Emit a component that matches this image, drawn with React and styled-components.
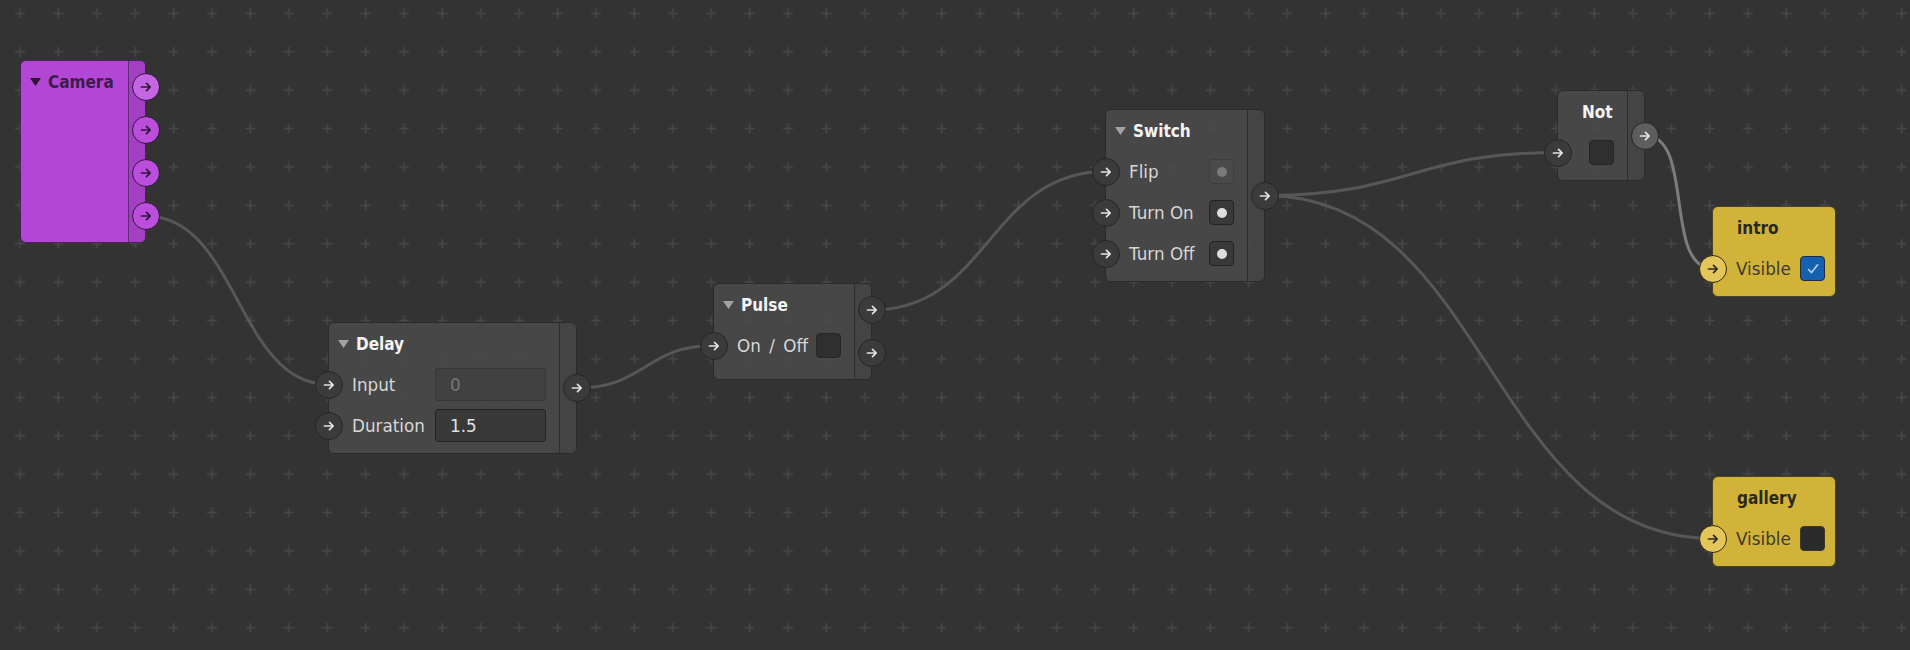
import React from "react";
import styled, { createGlobalStyle } from "styled-components";

const GlobalStyle = createGlobalStyle`
  html, body {
    margin: 0;
    padding: 0;
    background: #333333;
  }
  body {
    overflow: hidden;
    font-family: "DejaVu Sans", "Liberation Sans", sans-serif;
  }
`;

const themes = {
    gray: {
        bg: "rgba(75, 75, 75, 0.86)",
        strip: "rgba(0, 0, 0, 0.04)",
        border: "#2b2b2b",
        divider: "#2e2e2e",
        title: "#f4f4f4",
        text: "#d6d6d6",
        caret: "#a2a2a2",
        port: "#3b3b3b",
        portBorder: "#262626",
        arrow: "#e4e4e4",
        padRight: 13,
    },
    purple: {
        bg: "#b446d6",
        strip: "#a43ec4",
        border: "#4a2358",
        divider: "#5e2a72",
        title: "#3a1e47",
        text: "#3a1e47",
        caret: "#2c1536",
        port: "#bb4edc",
        portBorder: "#2e1838",
        arrow: "#2e1838",
        padRight: 13,
    },
    yellow: {
        bg: "#d2b33a",
        strip: "transparent",
        border: "#4c4226",
        divider: "transparent",
        title: "#2a2920",
        text: "#3e3b2d",
        caret: "#2a2920",
        port: "#e2c65a",
        portBorder: "#2d2a1e",
        arrow: "#2d2a22",
        padRight: 10,
    },
};

const HEADER = 41;
const ROW = 41;
const BODY_PAD = 7;
const PORT = 28;
const PORT_GAP = 15;
const STRIP_PAD = 12;

const nodes = [
    { id: "camera", x: 20, y: 60, w: 126, theme: "purple", title: "Camera", caret: true, rows: [], outs: 4, hotFirst: true },
    {
        id: "delay", x: 328, y: 322, w: 249, theme: "gray", title: "Delay", caret: true, outs: 1,
        rows: [
            { label: "Input", field: "0", disabled: true },
            { label: "Duration", field: "1.5" },
        ],
    },
    { id: "pulse", x: 713, y: 283, w: 159, theme: "gray", title: "Pulse", caret: true, outs: 2, rows: [{ label: "On / Off", check: "empty", wide: true }] },
    {
        id: "switch", x: 1105, y: 109, w: 160, theme: "gray", title: "Switch", caret: true, outs: 1,
        rows: [
            { label: "Flip", check: "dotOff" },
            { label: "Turn On", check: "dot" },
            { label: "Turn Off", check: "dot" },
        ],
    },
    { id: "not", x: 1557, y: 90, w: 88, theme: "gray", title: "Not", outs: 1, hotOut: true, rows: [{ check: "empty" }] },
    { id: "intro", x: 1712, y: 206, w: 124, theme: "yellow", title: "intro", outs: 0, rows: [{ label: "Visible", check: "checked" }] },
    { id: "gallery", x: 1712, y: 476, w: 124, theme: "yellow", title: "gallery", outs: 0, rows: [{ label: "Visible", check: "dark" }] },
];

const byId = Object.fromEntries(nodes.map((n) => [n.id, n]));

const innerHeight = (n) => {
    const body = HEADER + n.rows.length * ROW + BODY_PAD;
    const stack = n.outs * PORT + Math.max(n.outs - 1, 0) * PORT_GAP;
    return Math.max(body, n.outs ? stack + STRIP_PAD * 2 : 0);
};

const inPort = (id, i) => {
    const n = byId[id];
    return [n.x + 1, n.y + 1 + HEADER + ROW / 2 + i * ROW];
};

const outPort = (id, i) => {
    const n = byId[id];
    const stack = n.outs * PORT + (n.outs - 1) * PORT_GAP;
    const top = (innerHeight(n) - stack) / 2;
    return [n.x + n.w, n.y + 1 + top + PORT / 2 + i * (PORT + PORT_GAP)];
};

const wires = [
    { from: outPort("camera", 3), to: inPort("delay", 0) },
    { from: outPort("delay", 0), to: inPort("pulse", 0) },
    { from: outPort("pulse", 0), to: inPort("switch", 0) },
    { from: outPort("switch", 0), to: inPort("not", 0) },
    { from: outPort("switch", 0), to: inPort("gallery", 0) },
    { from: outPort("not", 0), to: inPort("intro", 0), hot: true },
];

const wirePath = ([x1, y1], [x2, y2]) => {
    const d = Math.max((x2 - x1) / 2, 50);
    return `M ${x1} ${y1} C ${x1 + d} ${y1}, ${x2 - d} ${y2}, ${x2} ${y2}`;
};

const Canvas = styled.div`
    position: relative;
    width: 1910px;
    height: 650px;
    overflow: hidden;
    background: #333333;
`;

const Layer = styled.svg`
    position: absolute;
    left: 0;
    top: 0;
    width: 1910px;
    height: 650px;
    pointer-events: none;
`;

const Wire = styled.path`
    fill: none;
    stroke: ${(p) => (p.$hot ? "#7c7c7c" : "#575757")};
    stroke-width: 3;
`;

const NodeBox = styled.div`
    position: absolute;
    left: ${(p) => p.$x}px;
    top: ${(p) => p.$y}px;
    width: ${(p) => p.$w}px;
    box-sizing: border-box;
    display: flex;
    background: ${(p) => p.$t.bg};
    border: 1px solid ${(p) => p.$t.border};
    border-radius: 6px;
    color: ${(p) => p.$t.text};
`;

const Body = styled.div`
    flex: 1;
    display: flex;
    flex-direction: column;
    padding-bottom: ${BODY_PAD}px;
`;

const Header = styled.div`
    height: ${HEADER}px;
    display: flex;
    align-items: center;
    gap: 7px;
    padding-left: ${(p) => (p.$caret ? 9 : 24)}px;
`;

const Title = styled.span`
    font-family: "DejaVu Sans Condensed", "DejaVu Sans", sans-serif;
    font-stretch: condensed;
    font-weight: 700;
    font-size: 17px;
    color: ${(p) => p.$t.title};
    padding-top: 1px;
`;

const Caret = styled.svg`
    width: 11px;
    height: 8px;
    flex: none;
`;

const Row = styled.div`
    position: relative;
    height: ${ROW}px;
    display: flex;
    align-items: center;
    justify-content: flex-end;
    padding: 0 ${(p) => p.$t.padRight}px 0 23px;
`;

const Label = styled.span`
    flex: 1;
    font-size: 16.8px;
    white-space: nowrap;
    word-spacing: ${(p) => (p.$wide ? "3px" : "0")};
`;

const Field = styled.div`
    width: 111px;
    height: 33px;
    box-sizing: border-box;
    display: flex;
    align-items: center;
    padding-left: 14px;
    font-size: 16.8px;
    border-radius: 3px;
    background: ${(p) => (p.$disabled ? "#414141" : "#393939")};
    border: 1px solid ${(p) => (p.$disabled ? "#383838" : "#242424")};
    color: ${(p) => (p.$disabled ? "#767676" : "#e0e0e0")};
`;

const checkLook = {
    empty: { bg: "#2f2f2f", border: "#262626" },
    dark: { bg: "#2b2b2b", border: "#3e3820" },
    dot: { bg: "#393939", border: "#222222", dot: "#dedede" },
    dotOff: { bg: "#4a4a4a", border: "#3d3d3d", dot: "#7a7a7a" },
    checked: { bg: "#1660b0", border: "#1f2c3c" },
};

const Check = styled.div`
    width: 25px;
    height: 25px;
    flex: none;
    box-sizing: border-box;
    display: flex;
    align-items: center;
    justify-content: center;
    border-radius: 4px;
    background: ${(p) => checkLook[p.$kind].bg};
    border: 1.5px solid ${(p) => checkLook[p.$kind].border};
`;

const Dot = styled.span`
    width: 10px;
    height: 10px;
    border-radius: 50%;
    background: ${(p) => p.$color};
`;

const Strip = styled.div`
    width: 16px;
    flex: none;
    display: flex;
    flex-direction: column;
    justify-content: center;
    align-items: flex-end;
    gap: ${PORT_GAP}px;
    padding: ${STRIP_PAD}px 0;
    background: ${(p) => p.$t.strip};
    border-left: 1px solid ${(p) => p.$t.divider};
    border-radius: 0 5px 5px 0;
`;

const PortDisc = styled.div`
    width: ${PORT}px;
    height: ${PORT}px;
    box-sizing: border-box;
    flex: none;
    display: flex;
    align-items: center;
    justify-content: center;
    border-radius: 50%;
    background: ${(p) => p.$fill || p.$t.port};
    border: 1.5px solid ${(p) => p.$t.portBorder};
`;

const OutPort = styled(PortDisc)`
    margin-right: -15px;
`;

const InPort = styled(PortDisc)`
    position: absolute;
    left: -14px;
    top: ${(ROW - PORT) / 2}px;
`;

const Arrow = ({ color }) => (
    <svg width="14" height="14" viewBox="0 0 14 14">
        <path d="M2.5 7 H11 M7.5 3.3 L11.2 7 L7.5 10.7" fill="none" stroke={color} strokeWidth="1.7" strokeLinecap="round" strokeLinejoin="round" />
    </svg>
);

const CheckMark = () => (
    <svg width="16" height="16" viewBox="0 0 16 16">
        <path d="M3.5 8.5 L6.6 11.6 L12.6 3.8" fill="none" stroke="#b9d2ee" strokeWidth="1.6" strokeLinecap="round" strokeLinejoin="round" />
    </svg>
);

const CheckBox = ({ kind }) => {
    const look = checkLook[kind];
    return (
        <Check $kind={kind}>
            {look.dot && <Dot $color={look.dot} />}
            {kind === "checked" && <CheckMark />}
        </Check>
    );
};

const Node = ({ node }) => {
    const t = themes[node.theme];
    return (
        <NodeBox $x={node.x} $y={node.y} $w={node.w} $t={t}>
            <Body>
                <Header $caret={node.caret}>
                    {node.caret && (
                        <Caret viewBox="0 0 11 8">
                            <path d="M0 0 H11 L5.5 8 Z" fill={t.caret} />
                        </Caret>
                    )}
                    <Title $t={t}>{node.title}</Title>
                </Header>
                {node.rows.map((r, i) => (
                    <Row key={i} $t={t}>
                        <InPort $t={t}>
                            <Arrow color={t.arrow} />
                        </InPort>
                        {r.label && <Label $wide={r.wide}>{r.label}</Label>}
                        {r.field && <Field $disabled={r.disabled}>{r.field}</Field>}
                        {r.check && <CheckBox kind={r.check} />}
                    </Row>
                ))}
            </Body>
            {node.outs > 0 && (
                <Strip $t={t}>
                    {Array.from({ length: node.outs }).map((_, i) => (
                        <OutPort
                            key={i}
                            $t={t}
                            $fill={node.hotOut ? "#5e5e5e" : node.hotFirst && i === 0 ? "#c466e2" : undefined}
                        >
                            <Arrow color={t.arrow} />
                        </OutPort>
                    ))}
                </Strip>
            )}
        </NodeBox>
    );
};

const Grid = () => (
    <Layer>
        <defs>
            <pattern id="plus" x="0.8" y="-5.9" width="38.4" height="38.4" patternUnits="userSpaceOnUse">
                <rect x="14.2" y="18.4" width="10" height="1.6" fill="#474747" />
                <rect x="18.4" y="14.2" width="1.6" height="10" fill="#474747" />
            </pattern>
        </defs>
        <rect width="1910" height="650" fill="url(#plus)" />
    </Layer>
);

const App = () => {
    return (
        <>
            <GlobalStyle />
            <Canvas>
                <Grid />
                <Layer>
                    {wires.map((w, i) => (
                        <Wire key={i} d={wirePath(w.from, w.to)} $hot={w.hot} />
                    ))}
                </Layer>
                {nodes.map((n) => (
                    <Node key={n.id} node={n} />
                ))}
            </Canvas>
        </>
    );
};

export default App;
